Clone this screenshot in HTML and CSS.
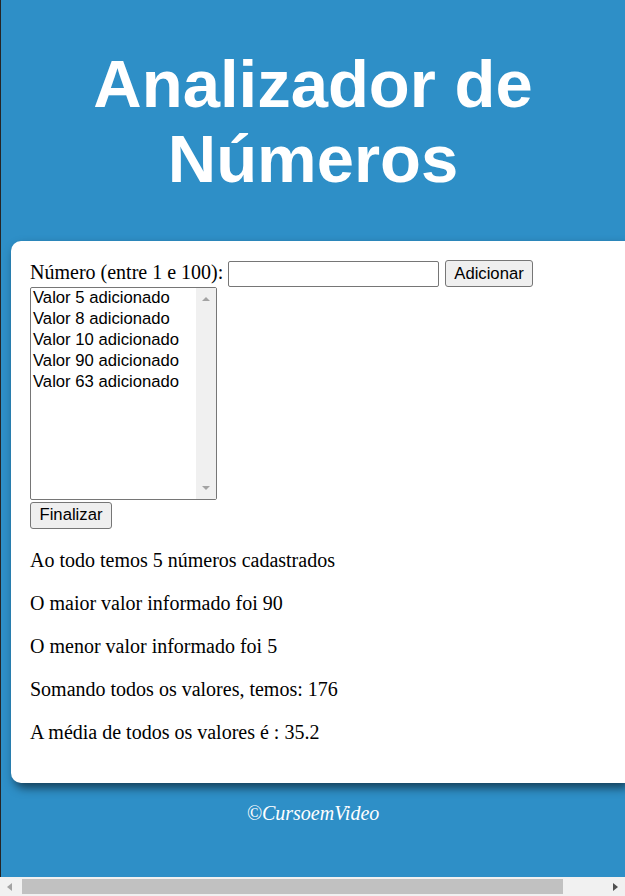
FILE: index.html
```html
<!DOCTYPE html>
<html lang="pt-BR">
<head>
<meta charset="utf-8">
<title>Analizador de Números</title>
<link rel="stylesheet" href="styles.css">
</head>
<body>
<header class="header">
  <h1 class="title">Analizador de Números</h1>
</header>
<main class="card">
  <div class="controls">
    <div class="entry-row">
      <label class="entry-label" for="num">Número (entre 1 e 100):</label>
      <input class="entry-input" type="text" id="num">
      <button class="btn btn-add" type="button">Adicionar</button>
    </div>
    <div class="listbox" role="listbox">
      <div class="listbox-options">
        <div class="listbox-option" role="option">Valor 5 adicionado</div>
        <div class="listbox-option" role="option">Valor 8 adicionado</div>
        <div class="listbox-option" role="option">Valor 10 adicionado</div>
        <div class="listbox-option" role="option">Valor 90 adicionado</div>
        <div class="listbox-option" role="option">Valor 63 adicionado</div>
      </div>
      <div class="listbox-scroll">
        <span class="arrow arrow-up"></span>
        <span class="arrow arrow-down"></span>
      </div>
    </div>
    <button class="btn btn-finish" type="button">Finalizar</button>
  </div>
  <div class="results">
    <p class="result-line">Ao todo temos 5 números cadastrados</p>
    <p class="result-line">O maior valor informado foi 90</p>
    <p class="result-line">O menor valor informado foi 5</p>
    <p class="result-line">Somando todos os valores, temos: 176</p>
    <p class="result-line">A média de todos os valores é : 35.2</p>
  </div>
</main>
<footer class="footer">
  <p class="footer-text">©CursoemVideo</p>
</footer>
<div class="hscroll" aria-hidden="true">
  <span class="hscroll-btn"><span class="hscroll-arrow hscroll-left"></span></span>
  <span class="hscroll-track"><span class="hscroll-thumb"></span></span>
  <span class="hscroll-btn"><span class="hscroll-arrow hscroll-right"></span></span>
</div>
</body>
</html>
```

FILE: styles.css
```css
html {
  height: 100%;
}

body {
  margin: 0;
  min-height: 100%;
  border-left: 1px solid #252525;
  background: #2e8fc7;
  font-family: "Liberation Serif", "Times New Roman", serif;
  font-size: 20px;
  color: #000;
}

.header {
  padding: 46px 0 45px;
}

.title {
  margin: 0;
  font-family: "Liberation Sans", Arial, sans-serif;
  font-weight: bold;
  font-size: 67px;
  line-height: 75px;
  text-align: center;
  color: #fff;
}

.card {
  display: block;
  box-sizing: border-box;
  width: calc(100% - 10px);
  margin: 0 0 0 10px;
  padding: 19px;
  background: #fff;
  border-radius: 10px 0 0 10px;
  box-shadow: 3px 5px 10px rgba(0, 0, 0, 0.55);
}

.controls {
  display: flex;
  flex-direction: column;
  align-items: flex-start;
}

.entry-row {
  display: flex;
  align-items: baseline;
}

.entry-label {
  line-height: 23px;
}

.entry-input {
  box-sizing: border-box;
  width: 211px;
  height: 26px;
  margin: 0 0 0 5px;
  padding: 1px 3px;
  border: 1px solid #767676;
  border-radius: 2px;
  background: #fff;
  font-family: "Liberation Sans", Arial, sans-serif;
  font-size: 16.667px;
}

.btn {
  box-sizing: border-box;
  margin: 0;
  padding: 0 8.5px;
  border: 1px solid #767676;
  border-radius: 3px;
  background: #efefef;
  color: #000;
  font-family: "Liberation Sans", Arial, sans-serif;
  font-size: 16.667px;
}

.btn-add {
  height: 27px;
  margin-left: 5.5px;
}

.btn-finish {
  height: 26.5px;
  margin-top: 2px;
}

.listbox {
  box-sizing: border-box;
  display: flex;
  width: 187px;
  height: 213px;
  border: 1px solid #767676;
  border-radius: 2px;
  background: #fff;
  font-family: "Liberation Sans", Arial, sans-serif;
  font-size: 16.667px;
}

.listbox-options {
  flex: 1;
}

.listbox-option {
  padding: 0.5px 2px 2px;
  line-height: 18.7px;
  white-space: nowrap;
}

.listbox-scroll {
  width: 20px;
  background: #f0f0f0;
  display: flex;
  flex-direction: column;
  justify-content: space-between;
  align-items: center;
  padding: 8.5px 0 9.5px;
}

.arrow {
  width: 0;
  height: 0;
  border-left: 4.5px solid transparent;
  border-right: 4.5px solid transparent;
}

.arrow-up {
  border-bottom: 4.5px solid #a3a3a3;
}

.arrow-down {
  border-top: 4.5px solid #a3a3a3;
}

.results {
  margin: 0;
}

.result-line {
  margin: 20px 0;
  line-height: 23px;
}

.footer {
  margin-top: 19px;
  text-align: center;
}

.footer-text {
  margin: 0;
  font-style: italic;
  color: #fff;
  line-height: 23px;
}

.hscroll {
  position: fixed;
  left: 0;
  right: 0;
  bottom: 0;
  height: 19px;
  display: flex;
  align-items: center;
  background: #f1f1f1;
}

.hscroll-btn {
  width: 19px;
  height: 19px;
  display: flex;
  align-items: center;
  justify-content: center;
}

.hscroll-arrow {
  width: 0;
  height: 0;
  border-top: 4.5px solid transparent;
  border-bottom: 4.5px solid transparent;
}

.hscroll-left {
  border-right: 5px solid #a3a3a3;
}

.hscroll-right {
  border-left: 5px solid #505050;
}

.hscroll-track {
  flex: 1;
  height: 19px;
  display: flex;
  align-items: center;
}

.hscroll-thumb {
  width: 541px;
  height: 15px;
  margin-left: 3px;
  background: #c1c1c1;
}
```
